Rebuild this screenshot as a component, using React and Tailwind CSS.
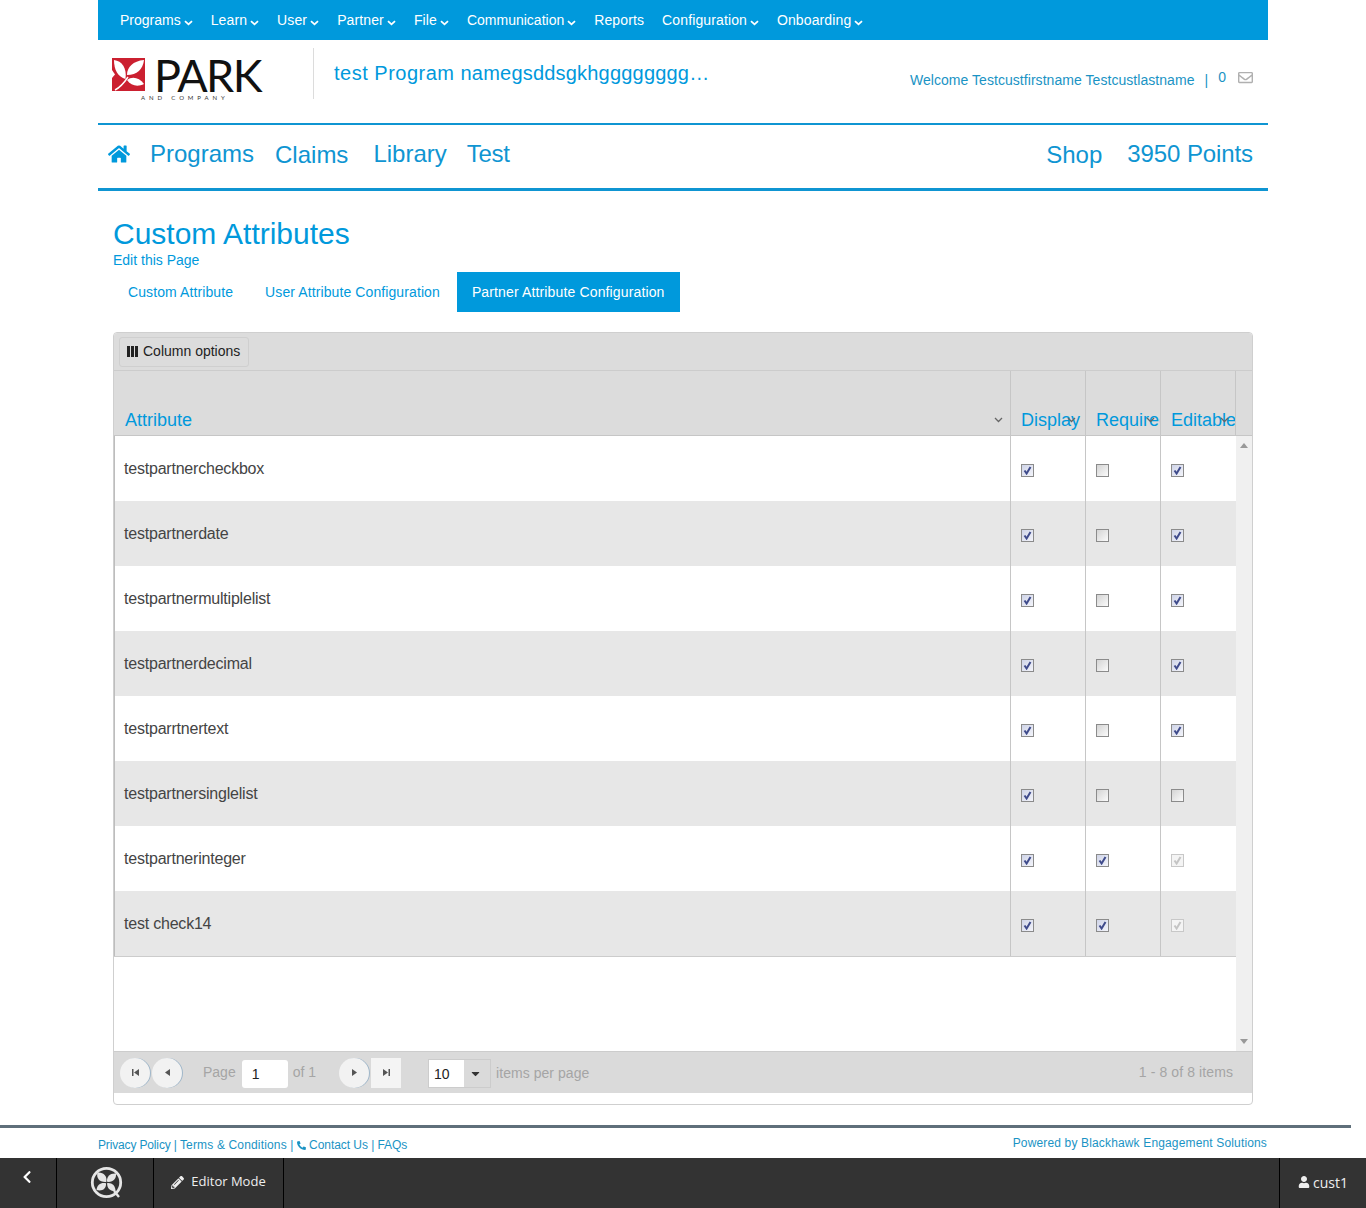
import React from "react";
import { FaHome, FaChevronLeft, FaPencilAlt, FaUser, FaPhoneAlt, FaRegEnvelope, FaCaretDown } from "react-icons/fa";

const sans = "font-['Liberation_Sans',Arial,sans-serif]";

const topNav = [
  { label: "Programs", caret: true, plain: true },
  { label: "Learn", caret: true },
  { label: "User", caret: true },
  { label: "Partner", caret: true },
  { label: "File", caret: true },
  { label: "Communication", caret: true, plain: true },
  { label: "Reports" },
  { label: "Configuration", caret: true },
  { label: "Onboarding", caret: true },
];

const rows = [
  { name: "testpartnercheckbox", req: false, edit: "on" },
  { name: "testpartnerdate", req: false, edit: "on" },
  { name: "testpartnermultiplelist", req: false, edit: "on" },
  { name: "testpartnerdecimal", req: false, edit: "on" },
  { name: "testparrtnertext", req: false, edit: "on" },
  { name: "testpartnersinglelist", req: false, edit: "off" },
  { name: "testpartnerinteger", req: true, edit: "disabled" },
  { name: "test check14", req: true, edit: "disabled" },
];

const NavCaret = () => (
  <svg width="9" height="6" viewBox="0 0 9 6" className="ml-[3px] mt-[6px]">
    <path d="M1 1.2 L4.5 4.4 L8 1.2" fill="none" stroke="white" strokeWidth="1.8" />
  </svg>
);

const Logo = () => (
  <div className="relative h-[60px] w-[160px]">
    <svg width="33" height="33" viewBox="0 0 33 33" className="absolute left-0 top-[1px]">
      <rect width="33" height="33" fill="#cb2030" />
      <g fill="#fff">
        <path d="M2 2 C10 3 15 10 13.5 21 C6 19 2 12 2 2 Z" />
        <path d="M15 17 C15 9 21 3 32 2 C31 11 25 17 15 17 Z" />
        <path d="M15 22 C20 18 27 19 32 26 C26 29 19 28 15 22 Z" />
        <path d="M0 12 L3 16.5 L0 20 Z" />
      </g>
      <path d="M3 32 C9 29 12 25 16 19" fill="none" stroke="#fff" strokeWidth="1.4" />
    </svg>
    <span className="absolute left-[42px] top-[1px] text-[45px] leading-[34px] font-['Lato',sans-serif] font-normal text-[#111] tracking-[-1.6px]">
      PARK
    </span>
    <span className="absolute left-[29px] top-[37px] whitespace-nowrap text-[6px] leading-[8px] tracking-[3.9px] text-[#333] font-['Lato',sans-serif]">
      AND COMPANY
    </span>
  </div>
);

const BarLogo = () => (
  <svg width="34" height="34" viewBox="0 0 34 34">
    <circle cx="16.5" cy="16.5" r="14.2" fill="none" stroke="#e6e6e6" strokeWidth="2.8" />
    <path d="M24 25 L29 31" stroke="#e6e6e6" strokeWidth="2.4" />
    <g fill="#e6e6e6">
      <path d="M16.3 16 C9.5 16.5 6 12 7.5 6.5 C13.5 6 17.5 10 16.3 16 Z" />
      <path d="M17 15.8 C16.5 10.5 20 7 26 7.5 C26.5 13 23 16.5 17 15.8 Z" />
      <path d="M16 17.2 C11 16.2 7 18.5 6.5 24 C12 25.5 16.5 23 16 17.2 Z" />
      <path d="M17.2 17 C22 16.5 25.5 19.5 25.5 25 C20.5 25.5 16.8 22.5 17.2 17 Z" />
    </g>
  </svg>
);

const Check = ({ state }) => {
  const disabled = state === "disabled";
  const on = state === "on" || disabled;
  return (
    <span
      className={`flex h-[13px] w-[13px] items-center justify-center border ${
        disabled
          ? "border-[#c8c8c8] bg-[#f4f4f4]"
          : on
            ? "border-[#8b8b8b] bg-gradient-to-br from-[#cfd4e8] to-[#f3f4fa]"
            : "border-[#8b8b8b] bg-gradient-to-br from-[#d4d4d4] to-[#fbfbfb]"
      }`}
    >
      {on && (
        <svg width="9" height="9" viewBox="0 0 9 9">
          <path d="M1.5 4.5 L3.6 7.5 L7.5 1" fill="none" stroke={disabled ? "#c4c4c4" : "#3f4b8c"} strokeWidth="2" />
        </svg>
      )}
    </span>
  );
};

const HeadCell = ({ label, arrowClass }) => (
  <div className="relative flex w-[75px] shrink-0 items-end overflow-hidden border-l border-[#c6c6c6] pb-[3px] pl-[10px] text-[18px] leading-[24px] text-[#0099dc]">
    <span className="whitespace-nowrap">{label}</span>
    <svg width="9" height="6" viewBox="0 0 9 6" className={`absolute bottom-[12px] ${arrowClass}`}>
      <path d="M1 1 L4.5 4.5 L8 1" fill="none" stroke="#666" strokeWidth="1.3" />
    </svg>
  </div>
);

const RoundBtn = ({ d }) => (
  <span className="flex h-[30px] w-[30px] items-center justify-center rounded-full bg-[#f2f2f2] shadow-[1px_0_0_#9fb6c9]">
    <svg width="9" height="9" viewBox="0 0 9 9">
      <path d={d} fill="#555" />
    </svg>
  </span>
);

export default function App() {
  return (
    <div className={`${sans} h-[1208px] w-[1366px] overflow-hidden bg-white`}>
      <div className="mx-auto w-[1170px]">
        <nav className="flex h-[40px] items-center gap-[18px] bg-[#0099dc] pl-[22px] text-[14px] text-white">
          {topNav.map((n) => (
            <span key={n.label} className={`flex items-center ${n.plain ? "" : "tracking-[0.12px]"}`}>
              {n.label}
              {n.caret && <NavCaret />}
            </span>
          ))}
        </nav>

        <header className="flex h-[85px] border-b-2 border-[#0f95d2]">
          <div className="w-[215px] shrink-0 pl-[14px] pt-[17px]">
            <Logo />
          </div>
          <div className="mt-[8px] h-[51px] w-px bg-[#dcdcdc]" />
          <div className="ml-[20px] whitespace-pre pt-[21px] text-[20px] leading-[24px] text-[#0099dc]">
            <span className="tracking-[0.5px]">test Program </span>
            <span className="tracking-[0.2px]">namegsddsgkhgggggggg…</span>
          </div>
          <div className="ml-auto flex items-start pr-[15px] pt-[30px] text-[14px] leading-[20px] tracking-[0.05px] text-[#1a93c4]">
            <span>Welcome Testcustfirstname Testcustlastname</span>
            <span className="ml-[10px]">|</span>
            <span className="ml-[10px] -mt-[3px]">0</span>
            <FaRegEnvelope className="ml-[12px] text-[15px] text-[#b0b0b0]" />
          </div>
        </header>

        <div className="flex h-[66px] items-center border-b-[3px] border-[#0f95d2] pb-[5px] text-[24px] leading-[30px] text-[#0f95d2]">
          <FaHome className="ml-[10px] text-[22px] text-[#0099dc]" />
          <span className="ml-[20px]">Programs</span>
          <span className="ml-[21px] mt-[2px]">Claims</span>
          <span className="ml-[25px]">Library</span>
          <span className="ml-[20px] tracking-[-0.3px]">Test</span>
          <span className="ml-auto mt-[2px]">Shop</span>
          <span className="ml-[25px] mr-[15px] tracking-[-0.1px]">3950 Points</span>
        </div>

        <div className="px-[15px]">
          <h1 className="mt-[25px] text-[30px] leading-[36px] text-[#0099dc]">Custom Attributes</h1>
          <a className="block text-[14px] leading-[16px] text-[#0099dc]">Edit this Page</a>
          <div className="mt-[4px] flex h-[40px] items-center text-[14px] tracking-[0.1px] text-[#0099dc]">
            <span className="px-[15px]">Custom Attribute</span>
            <span className="ml-[2px] px-[15px]">User Attribute Configuration</span>
            <span className="ml-[2px] flex h-full items-center bg-[#0099dc] pl-[15px] pr-[15px] tracking-[0.14px] text-white">
              Partner Attribute Configuration
            </span>
          </div>

          <div className="mt-[20px] h-[773px] w-[1140px] overflow-hidden rounded-[4px] border border-[#cfcfcf]">
            <div className="flex h-[38px] items-center border-b border-[#cccccc] bg-[#dcdcdc] pl-[5px]">
              <span className="flex h-[30px] w-[130px] items-center rounded-[3px] border border-[#cfcfcf] pl-[7px] text-[14px] text-[#222]">
                <span className="mr-[5px] flex gap-[1px]">
                  <i className="block h-[11px] w-[3px] bg-[#222]" />
                  <i className="block h-[11px] w-[3px] bg-[#222]" />
                  <i className="block h-[11px] w-[3px] bg-[#222]" />
                </span>
                Column options
              </span>
            </div>

            <div className="flex h-[65px] border-b border-[#c6c6c6] bg-[#dcdcdc]">
              <div className="relative flex w-[896px] shrink-0 items-end pb-[3px] pl-[11px] text-[18px] leading-[24px] text-[#0099dc]">
                Attribute
                <svg width="9" height="6" viewBox="0 0 9 6" className="absolute bottom-[12px] right-[7px]">
                  <path d="M1 1 L4.5 4.5 L8 1" fill="none" stroke="#666" strokeWidth="1.3" />
                </svg>
              </div>
              <HeadCell label="Display" arrowClass="left-[56px]" />
              <HeadCell label="Required" arrowClass="left-[60px]" />
              <HeadCell label="Editable" arrowClass="left-[59px]" />
              <div className="flex-1 border-l border-[#c6c6c6]" />
            </div>

            <div className="flex h-[615px]">
              <div className="w-[1122px] shrink-0">
                <div className="border-l border-[#bdbdbd]">
                  {rows.map((r, i) => (
                    <div key={r.name} className={`flex h-[65px] ${i % 2 ? "bg-[#e7e7e7]" : "bg-white"}`}>
                      <div className="w-[895px] shrink-0 pl-[9px] pt-[22px] text-[16px] leading-[22px] tracking-[-0.21px] text-[#444]">{r.name}</div>
                      {["on", r.req ? "on" : "off", r.edit].map((s, j) => (
                        <div key={j} className="w-[75px] shrink-0 border-l border-[#c6c6c6] pl-[10px] pt-[28px]">
                          <Check state={s} />
                        </div>
                      ))}
                    </div>
                  ))}
                </div>
                <div className="border-t border-[#cccccc]" />
              </div>
              <div className="flex flex-1 flex-col items-center justify-between bg-[#f0f0f0] py-[7px]">
                <svg width="8" height="5" viewBox="0 0 8 5"><path d="M0 5 L4 0 L8 5 Z" fill="#999" /></svg>
                <svg width="8" height="5" viewBox="0 0 8 5"><path d="M0 0 L4 5 L8 0 Z" fill="#999" /></svg>
              </div>
            </div>

            <div className="flex h-[42px] items-center border-t border-[#cccccc] bg-[#dadada] pl-[6px] pr-[19px] text-[14px] text-[#a5a5a5]">
              <RoundBtn d="M1 1 H2.5 V8 H1 Z M8 1 V8 L3 4.5 Z" />
              <span className="ml-[2px]"><RoundBtn d="M7 1 V8 L2 4.5 Z" /></span>
              <span className="ml-[21px]">Page</span>
              <span className="ml-[6px] mt-[2px] flex h-[28px] w-[46px] items-center rounded-[3px] bg-white pl-[10px] pt-[2px] text-[14px] text-[#222]">1</span>
              <span className="ml-[5px]">of 1</span>
              <span className="ml-[23px]"><RoundBtn d="M2 1 V8 L7 4.5 Z" /></span>
              <span className="ml-[2px] flex h-[30px] w-[30px] items-center justify-center bg-[#f4f4f4]">
                <svg width="9" height="9" viewBox="0 0 9 9"><path d="M1 1 V8 L6 4.5 Z M6.5 1 H8 V8 H6.5 Z" fill="#555" /></svg>
              </span>
              <span className="ml-[27px] mt-[2px] flex h-[29px] w-[63px] border border-[#cccccc]">
                <span className="flex w-[35px] items-center bg-white pl-[5px] pt-[1px] text-[#222]">10</span>
                <span className="flex flex-1 items-center justify-center pr-[3px] text-[#333]"><FaCaretDown className="text-[13px]" /></span>
              </span>
              <span className="ml-[5px] mt-[1px] tracking-[0.05px]">items per page</span>
              <span className="ml-auto tracking-[0.1px]">1 - 8 of 8 items</span>
            </div>
          </div>
        </div>
      </div>

      <footer className="mt-[20px]">
        <div className="h-[3px] w-[1351px] bg-[#5f6f7a]" />
        <div className="mx-auto flex h-[30px] w-[1170px] items-start justify-between text-[12px] leading-[14px] text-[#1a93c4]">
          <span className="mt-[10px] flex items-center whitespace-pre">
            <span className="tracking-[-0.15px]">Privacy Policy | </span>
            <span className="tracking-[0.16px]">Terms &amp; Conditions | </span>
            <FaPhoneAlt className="mr-[3px] text-[9px]" />
            <span className="tracking-[-0.06px]">Contact Us | FAQs</span>
          </span>
          <span className="mt-[8px] mr-px tracking-[0.15px]">Powered by Blackhawk Engagement Solutions</span>
        </div>
        <div className="flex h-[50px] bg-[#333333] text-[13px] text-[#eeeeee] font-['Open_Sans',sans-serif]">
          <div className="flex w-[57px] justify-center border-r border-black pt-[12px] pr-[2px] text-white">
            <FaChevronLeft className="text-[14px]" />
          </div>
          <div className="flex w-[97px] items-center justify-center border-r border-black pl-[3px]">
            <BarLogo />
          </div>
          <div className="flex w-[130px] items-center justify-center border-r border-black pb-[2px]">
            <FaPencilAlt className="mr-[7px] text-[13px]" />
            Editor Mode
          </div>
          <div className="ml-auto flex w-[87px] items-center border-l border-black pb-[2px] pl-[18px] text-[14px]">
            <FaUser className="mr-[3px] text-[12px]" />
            cust1
          </div>
        </div>
      </footer>
    </div>
  );
}
